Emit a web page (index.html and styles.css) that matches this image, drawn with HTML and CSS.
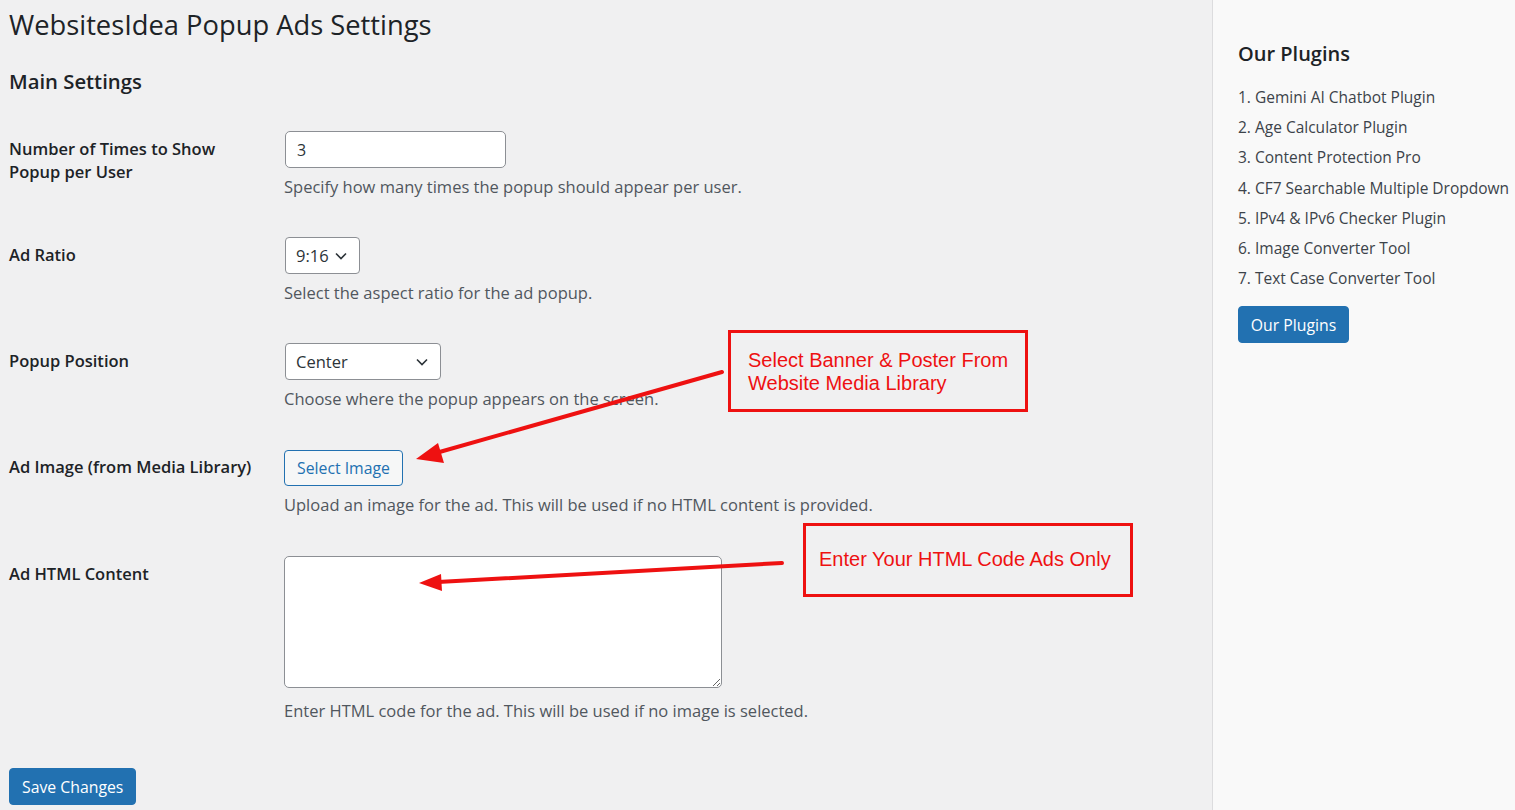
FILE: index.html
```html
<!DOCTYPE html>
<html lang="en">
<head>
<meta charset="UTF-8">
<title>WebsitesIdea Popup Ads Settings</title>
<link rel="stylesheet" href="styles.css">
</head>
<body>
<div class="page">
	<main class="main">
		<h1 class="title">WebsitesIdea Popup Ads Settings</h1>
		<h2 class="section">Main Settings</h2>
		<form class="settings" onsubmit="return false;">
			<div class="row">
				<label class="row-label" for="times">Number of Times to Show Popup per User</label>
				<div class="row-field">
					<input id="times" class="text-input" type="number" value="3">
					<p class="desc">Specify how many times the popup should appear per user.</p>
				</div>
			</div>
			<div class="row">
				<label class="row-label" for="ratio">Ad Ratio</label>
				<div class="row-field">
					<div class="select select-ratio" id="ratio">9:16
						<svg class="chev" viewBox="0 0 12 8" width="12" height="8"><path d="M1 1.5 L6 6.5 L11 1.5" fill="none" stroke="#2c3338" stroke-width="1.6"/></svg>
					</div>
					<p class="desc">Select the aspect ratio for the ad popup.</p>
				</div>
			</div>
			<div class="row">
				<label class="row-label" for="position">Popup Position</label>
				<div class="row-field">
					<div class="select select-position" id="position">Center
						<svg class="chev" viewBox="0 0 12 8" width="12" height="8"><path d="M1 1.5 L6 6.5 L11 1.5" fill="none" stroke="#2c3338" stroke-width="1.6"/></svg>
					</div>
					<p class="desc">Choose where the popup appears on the screen.</p>
				</div>
			</div>
			<div class="row row-image">
				<label class="row-label">Ad Image (from Media Library)</label>
				<div class="row-field">
					<button type="button" class="btn-secondary">Select Image</button>
					<p class="desc">Upload an image for the ad. This will be used if no HTML content is provided.</p>
				</div>
			</div>
			<div class="row row-html">
				<label class="row-label" for="html">Ad HTML Content</label>
				<div class="row-field">
					<textarea id="html" class="text-area"></textarea>
					<p class="desc">Enter HTML code for the ad. This will be used if no image is selected.</p>
				</div>
			</div>
			<p class="submit"><button type="submit" class="btn-primary">Save Changes</button></p>
		</form>
	</main>
	<aside class="sidebar">
		<h3 class="side-title">Our Plugins</h3>
		<ol class="plugin-list">
			<li>1. Gemini AI Chatbot Plugin</li>
			<li>2. Age Calculator Plugin</li>
			<li>3. Content Protection Pro</li>
			<li>4. CF7 Searchable Multiple Dropdown</li>
			<li>5. IPv4 &amp; IPv6 Checker Plugin</li>
			<li>6. Image Converter Tool</li>
			<li>7. Text Case Converter Tool</li>
		</ol>
		<button type="button" class="btn-primary">Our Plugins</button>
	</aside>
</div>

<div class="note note-media">Select Banner &amp; Poster From<br>Website Media Library</div>
<div class="note note-html">Enter Your HTML Code Ads Only</div>
<svg class="arrows" width="1515" height="810" viewBox="0 0 1515 810">
	<line x1="722" y1="372" x2="436" y2="453" stroke="#ee1111" stroke-width="4" stroke-linecap="round"/>
	<polygon points="416,459 438,443 444,463" fill="#ee1111"/>
	<line x1="782" y1="563" x2="438" y2="582" stroke="#ee1111" stroke-width="4" stroke-linecap="round"/>
	<polygon points="419,583 441,574 442,591" fill="#ee1111"/>
</svg>
</body>
</html>
```

FILE: styles.css
```css
body {
	margin: 0;
	background: #f0f0f1;
	color: #1d2327;
	font-family: "Open Sans", "Noto Sans", sans-serif;
}
.page {
	display: grid;
	grid-template-columns: 1fr 303px;
	min-height: 810px;
}
.main {
	padding: 0 0 0 9px;
}
.title {
	margin: 6px 0 0;
	font-size: 27.3px;
	font-weight: 400;
	line-height: 38px;
	color: #1d2327;
}
.section {
	margin: 22px 0 0;
	font-size: 20.3px;
	font-weight: 600;
	line-height: 30px;
}
.settings {
	margin-top: 16px;
}
.row {
	display: grid;
	grid-template-columns: 275px 1fr;
	padding: 19px 0 18px;
}
.row-image {
	padding-bottom: 19px;
}
.row-label {
	padding-top: 6px;
	font-size: 16.5px;
	font-weight: 600;
	line-height: 23px;
	width: 262px;
}
.row:first-child .row-label {
	width: 230px;
}
.row-field {
	display: flex;
	flex-direction: column;
	align-items: flex-start;
}
.text-input {
	box-sizing: border-box;
	width: 221px;
	height: 37px;
	margin: 0 0 0 1px;
	padding: 0 11px;
	border: 1px solid #8c8f94;
	border-radius: 5px;
	background: #fff;
	font: 16px "Open Sans", sans-serif;
	color: #2c3338;
	-moz-appearance: textfield;
}
.text-input::-webkit-inner-spin-button,
.text-input::-webkit-outer-spin-button {
	-webkit-appearance: none;
	margin: 0;
}
.select {
	box-sizing: border-box;
	display: flex;
	align-items: center;
	justify-content: space-between;
	height: 37px;
	margin-left: 1px;
	padding: 0 12px 0 10px;
	border: 1px solid #8c8f94;
	border-radius: 4px;
	background: #fff;
	font-size: 16.5px;
	color: #2c3338;
}
.select-ratio {
	width: 75px;
}
.select-position {
	width: 156px;
}
.desc {
	margin: 6px 0 0;
	font-size: 16.5px;
	line-height: 26px;
	color: #50575e;
}
.btn-secondary {
	box-sizing: border-box;
	height: 36px;
	margin-top: 1px;
	padding: 0 12px;
	border: 1px solid #2271b1;
	border-radius: 4px;
	background: #f6f7f7;
	color: #2271b1;
	font: 15.8px "Open Sans", sans-serif;
}
.text-area {
	box-sizing: border-box;
	display: block;
	width: 438px;
	height: 132px;
	margin: 0;
	border: 1px solid #8c8f94;
	border-radius: 5px;
	background: #fff;
}
.row-html .desc {
	margin-top: 10px;
}
.submit {
	margin: 26px 0 0;
}
.btn-primary {
	box-sizing: border-box;
	height: 37px;
	padding: 0 12px;
	border: 1px solid #2271b1;
	border-radius: 4px;
	background: #2271b1;
	color: #fff;
	font: 15.8px "Open Sans", sans-serif;
}
.sidebar {
	background: #f9f9f9;
	border-left: 1px solid #dcdcde;
	padding: 0 0 0 25px;
}
.side-title {
	margin: 39px 0 0;
	font-size: 20px;
	font-weight: 600;
	line-height: 30px;
}
.plugin-list {
	list-style: none;
	margin: 13px 0 0;
	padding: 0;
	font-size: 15.5px;
	color: #3c434a;
}
.plugin-list li {
	line-height: 30.2px;
}
.sidebar .btn-primary {
	margin-top: 13px;
	width: 111px;
	padding: 0;
}
.note {
	position: absolute;
	box-sizing: border-box;
	border: 3px solid #ee1111;
	color: #ee1111;
	font-family: "Liberation Sans", Arial, sans-serif;
	font-size: 20px;
	line-height: 23px;
}
.note-media {
	left: 728px;
	top: 330px;
	width: 300px;
	height: 82px;
	padding: 16px 0 0 17px;
}
.note-html {
	left: 803px;
	top: 523px;
	width: 330px;
	height: 74px;
	padding: 22px 0 0 13px;
}
.arrows {
	position: absolute;
	top: 0;
	left: 0;
	pointer-events: none;
}
```
